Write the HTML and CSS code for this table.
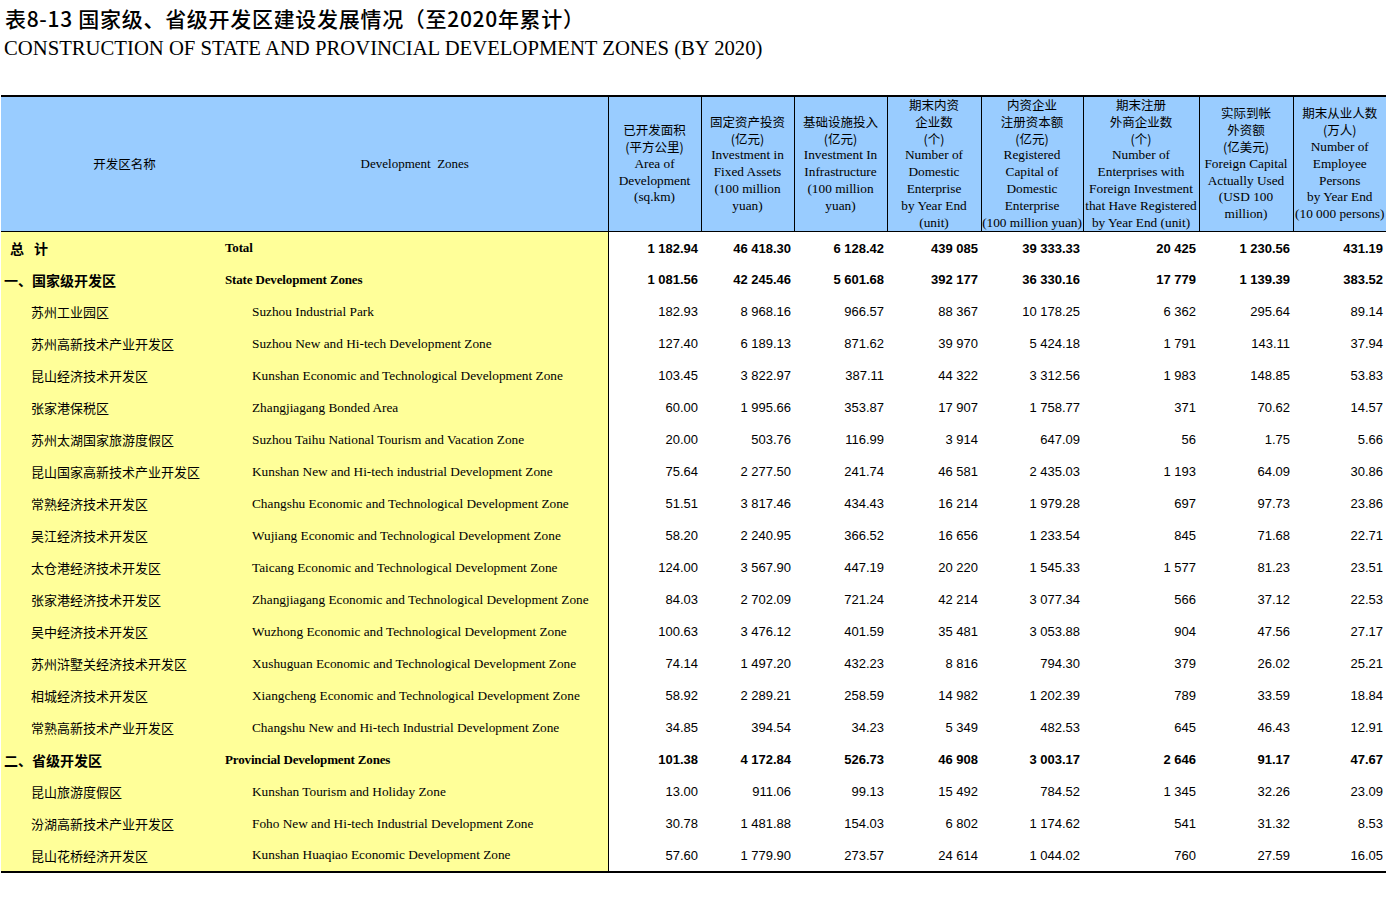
FILE: index.html
```html
<!DOCTYPE html>
<html lang="zh-CN">
<head>
<meta charset="utf-8">
<title>表8-13 国家级、省级开发区建设发展情况</title>
<link rel="stylesheet" href="styles.css">
</head>
<body>
<div class="page">
  <h1 class="title-zh">表8-13 国家级、省级开发区建设发展情况（至2020年累计）</h1>
  <h2 class="title-en">CONSTRUCTION OF STATE AND PROVINCIAL DEVELOPMENT ZONES (BY 2020)</h2>
  <table class="t">
    <colgroup>
      <col class="w1"><col class="w2"><col class="w3"><col class="w4"><col class="w5">
      <col class="w6"><col class="w7"><col class="w8"><col class="w9"><col class="w10">
    </colgroup>
    <thead>
      <tr>
        <th class="h-name-zh"><span class="zh">开发区名称</span></th>
        <th class="h-name-en">Development&nbsp; Zones</th>
        <th><span class="zh">已开发面积<br>(平方公里)</span>Area of<br>Development<br>(sq.km)</th>
        <th><span class="zh">固定资产投资<br>(亿元)</span>Investment in<br>Fixed Assets<br>(100 million<br>yuan)</th>
        <th><span class="zh">基础设施投入<br>(亿元)</span>Investment In<br>Infrastructure<br>(100 million<br>yuan)</th>
        <th><span class="zh">期末内资<br>企业数<br>(个)</span>Number of<br>Domestic<br>Enterprise<br>by Year End<br>(unit)</th>
        <th><span class="zh">内资企业<br>注册资本额<br>(亿元)</span>Registered<br>Capital of<br>Domestic<br>Enterprise<br>(100 million yuan)</th>
        <th><span class="zh">期末注册<br>外商企业数<br>(个)</span>Number of<br>Enterprises with<br>Foreign Investment<br>that Have Registered<br>by Year End (unit)</th>
        <th><span class="zh">实际到帐<br>外资额<br>(亿美元)</span>Foreign Capital<br>Actually Used<br>(USD 100<br>million)</th>
        <th><span class="zh">期末从业人数<br>(万人)</span>Number of<br>Employee<br>Persons<br>by Year End<br>(10 000 persons)</th>
      </tr>
    </thead>
    <tbody>
      <tr class="b"><td class="zh-c total">总<span class="gap"></span>计</td><td class="en-c">Total</td><td>1 182.94</td><td>46 418.30</td><td>6 128.42</td><td>439 085</td><td>39 333.33</td><td>20 425</td><td>1 230.56</td><td>431.19</td></tr>
      <tr class="b"><td class="zh-c">一、国家级开发区</td><td class="en-c">State Development Zones</td><td>1 081.56</td><td>42 245.46</td><td>5 601.68</td><td>392 177</td><td>36 330.16</td><td>17 779</td><td>1 139.39</td><td>383.52</td></tr>
      <tr><td class="zh-c">苏州工业园区</td><td class="en-c">Suzhou Industrial Park</td><td>182.93</td><td>8 968.16</td><td>966.57</td><td>88 367</td><td>10 178.25</td><td>6 362</td><td>295.64</td><td>89.14</td></tr>
      <tr><td class="zh-c">苏州高新技术产业开发区</td><td class="en-c">Suzhou New and Hi-tech Development Zone</td><td>127.40</td><td>6 189.13</td><td>871.62</td><td>39 970</td><td>5 424.18</td><td>1 791</td><td>143.11</td><td>37.94</td></tr>
      <tr><td class="zh-c">昆山经济技术开发区</td><td class="en-c">Kunshan Economic and Technological Development Zone</td><td>103.45</td><td>3 822.97</td><td>387.11</td><td>44 322</td><td>3 312.56</td><td>1 983</td><td>148.85</td><td>53.83</td></tr>
      <tr><td class="zh-c">张家港保税区</td><td class="en-c">Zhangjiagang Bonded Area</td><td>60.00</td><td>1 995.66</td><td>353.87</td><td>17 907</td><td>1 758.77</td><td>371</td><td>70.62</td><td>14.57</td></tr>
      <tr><td class="zh-c">苏州太湖国家旅游度假区</td><td class="en-c">Suzhou Taihu National Tourism and Vacation Zone</td><td>20.00</td><td>503.76</td><td>116.99</td><td>3 914</td><td>647.09</td><td>56</td><td>1.75</td><td>5.66</td></tr>
      <tr><td class="zh-c">昆山国家高新技术产业开发区</td><td class="en-c">Kunshan New and Hi-tech industrial Development Zone</td><td>75.64</td><td>2 277.50</td><td>241.74</td><td>46 581</td><td>2 435.03</td><td>1 193</td><td>64.09</td><td>30.86</td></tr>
      <tr><td class="zh-c">常熟经济技术开发区</td><td class="en-c">Changshu Economic and Technological Development Zone</td><td>51.51</td><td>3 817.46</td><td>434.43</td><td>16 214</td><td>1 979.28</td><td>697</td><td>97.73</td><td>23.86</td></tr>
      <tr><td class="zh-c">吴江经济技术开发区</td><td class="en-c">Wujiang Economic and Technological Development Zone</td><td>58.20</td><td>2 240.95</td><td>366.52</td><td>16 656</td><td>1 233.54</td><td>845</td><td>71.68</td><td>22.71</td></tr>
      <tr><td class="zh-c">太仓港经济技术开发区</td><td class="en-c">Taicang Economic and Technological Development Zone</td><td>124.00</td><td>3 567.90</td><td>447.19</td><td>20 220</td><td>1 545.33</td><td>1 577</td><td>81.23</td><td>23.51</td></tr>
      <tr><td class="zh-c">张家港经济技术开发区</td><td class="en-c">Zhangjiagang Economic and Technological Development Zone</td><td>84.03</td><td>2 702.09</td><td>721.24</td><td>42 214</td><td>3 077.34</td><td>566</td><td>37.12</td><td>22.53</td></tr>
      <tr><td class="zh-c">吴中经济技术开发区</td><td class="en-c">Wuzhong Economic and Technological Development Zone</td><td>100.63</td><td>3 476.12</td><td>401.59</td><td>35 481</td><td>3 053.88</td><td>904</td><td>47.56</td><td>27.17</td></tr>
      <tr><td class="zh-c">苏州浒墅关经济技术开发区</td><td class="en-c">Xushuguan Economic and Technological Development Zone</td><td>74.14</td><td>1 497.20</td><td>432.23</td><td>8 816</td><td>794.30</td><td>379</td><td>26.02</td><td>25.21</td></tr>
      <tr><td class="zh-c">相城经济技术开发区</td><td class="en-c">Xiangcheng Economic and Technological Development Zone</td><td>58.92</td><td>2 289.21</td><td>258.59</td><td>14 982</td><td>1 202.39</td><td>789</td><td>33.59</td><td>18.84</td></tr>
      <tr><td class="zh-c">常熟高新技术产业开发区</td><td class="en-c">Changshu New and Hi-tech Industrial Development Zone</td><td>34.85</td><td>394.54</td><td>34.23</td><td>5 349</td><td>482.53</td><td>645</td><td>46.43</td><td>12.91</td></tr>
      <tr class="b"><td class="zh-c">二、省级开发区</td><td class="en-c">Provincial Development Zones</td><td>101.38</td><td>4 172.84</td><td>526.73</td><td>46 908</td><td>3 003.17</td><td>2 646</td><td>91.17</td><td>47.67</td></tr>
      <tr><td class="zh-c">昆山旅游度假区</td><td class="en-c">Kunshan Tourism and Holiday Zone</td><td>13.00</td><td>911.06</td><td>99.13</td><td>15 492</td><td>784.52</td><td>1 345</td><td>32.26</td><td>23.09</td></tr>
      <tr><td class="zh-c">汾湖高新技术产业开发区</td><td class="en-c">Foho New and Hi-tech Industrial Development Zone</td><td>30.78</td><td>1 481.88</td><td>154.03</td><td>6 802</td><td>1 174.62</td><td>541</td><td>31.32</td><td>8.53</td></tr>
      <tr class="last"><td class="zh-c">昆山花桥经济开发区</td><td class="en-c">Kunshan Huaqiao Economic Development Zone</td><td>57.60</td><td>1 779.90</td><td>273.57</td><td>24 614</td><td>1 044.02</td><td>760</td><td>27.59</td><td>16.05</td></tr>
    </tbody>
  </table>
</div>
</body>
</html>
```

FILE: styles.css
```css
* { box-sizing: border-box; }

html, body {
  margin: 0;
  padding: 0;
  background: #ffffff;
  color: #000000;
}

.page {
  width: 1386px;
  padding-top: 4px;
}

.title-zh {
  margin: 0;
  padding-left: 5px;
  height: 28px;
  line-height: 28px;
  font-family: "Noto Sans CJK SC", sans-serif;
  font-size: 21px;
  font-weight: 500;
  letter-spacing: 0.7px;
  white-space: nowrap;
}

.title-en {
  margin: 0;
  padding-left: 4px;
  height: 32px;
  line-height: 32px;
  font-family: "Liberation Serif", serif;
  font-size: 20.7px;
  font-weight: normal;
  white-space: nowrap;
}

.t {
  margin-top: 31px;
  margin-left: 1px;
  width: 1385px;
  border-collapse: collapse;
  table-layout: fixed;
  border-top: 2px solid #000;
  font-family: "Liberation Serif", serif;
}

.w1 { width: 221px; }
.w2 { width: 386px; }
.w3 { width: 93px; }
.w4 { width: 93px; }
.w5 { width: 93px; }
.w6 { width: 94px; }
.w7 { width: 102px; }
.w8 { width: 116px; }
.w9 { width: 94px; }
.w10 { width: 93px; }

.t th {
  height: 135px;
  padding: 0;
  background: #99ccff;
  border-left: 1px solid #000;
  border-bottom: 1px solid #000;
  font-family: "Liberation Serif", serif;
  font-size: 13.3px;
  font-weight: normal;
  line-height: 16.8px;
  text-align: center;
  vertical-align: middle;
  white-space: nowrap;
}

.t th:first-child { border-left: none; }
.t th.h-name-en { border-left: none; font-size: 13px; }

.zh {
  display: block;
  font-family: "Noto Sans CJK SC", sans-serif;
  font-size: 12.5px;
  line-height: 16.8px;
}

.t th.h-name-zh { padding-left: 26px; }

.t td {
  height: 32px;
  padding: 0 3px 0 0;
  font-family: "Liberation Sans", Arial, sans-serif;
  font-size: 13px;
  text-align: right;
  vertical-align: middle;
  white-space: nowrap;
}

.t td.zh-c,
.t td.en-c {
  background: #ffff99;
  text-align: left;
}

.t td.zh-c {
  padding-left: 30px;
  font-family: "Noto Sans CJK SC", sans-serif;
  font-size: 13px;
}

.t td.en-c {
  padding-left: 30px;
  border-right: 1px solid #000;
  font-family: "Liberation Serif", serif;
  font-size: 13.3px;
}

.t tr.b td { font-weight: bold; }
.t tr.b td.zh-c { padding-left: 3px; font-size: 14px; }
.t tr.b td.en-c { padding-left: 3px; font-size: 13px; letter-spacing: -0.15px; }
.t tr.b td.total { padding-left: 9px; }

.gap { display: inline-block; width: 10px; }

.t tr.last td { border-bottom: 2px solid #000; }
```
